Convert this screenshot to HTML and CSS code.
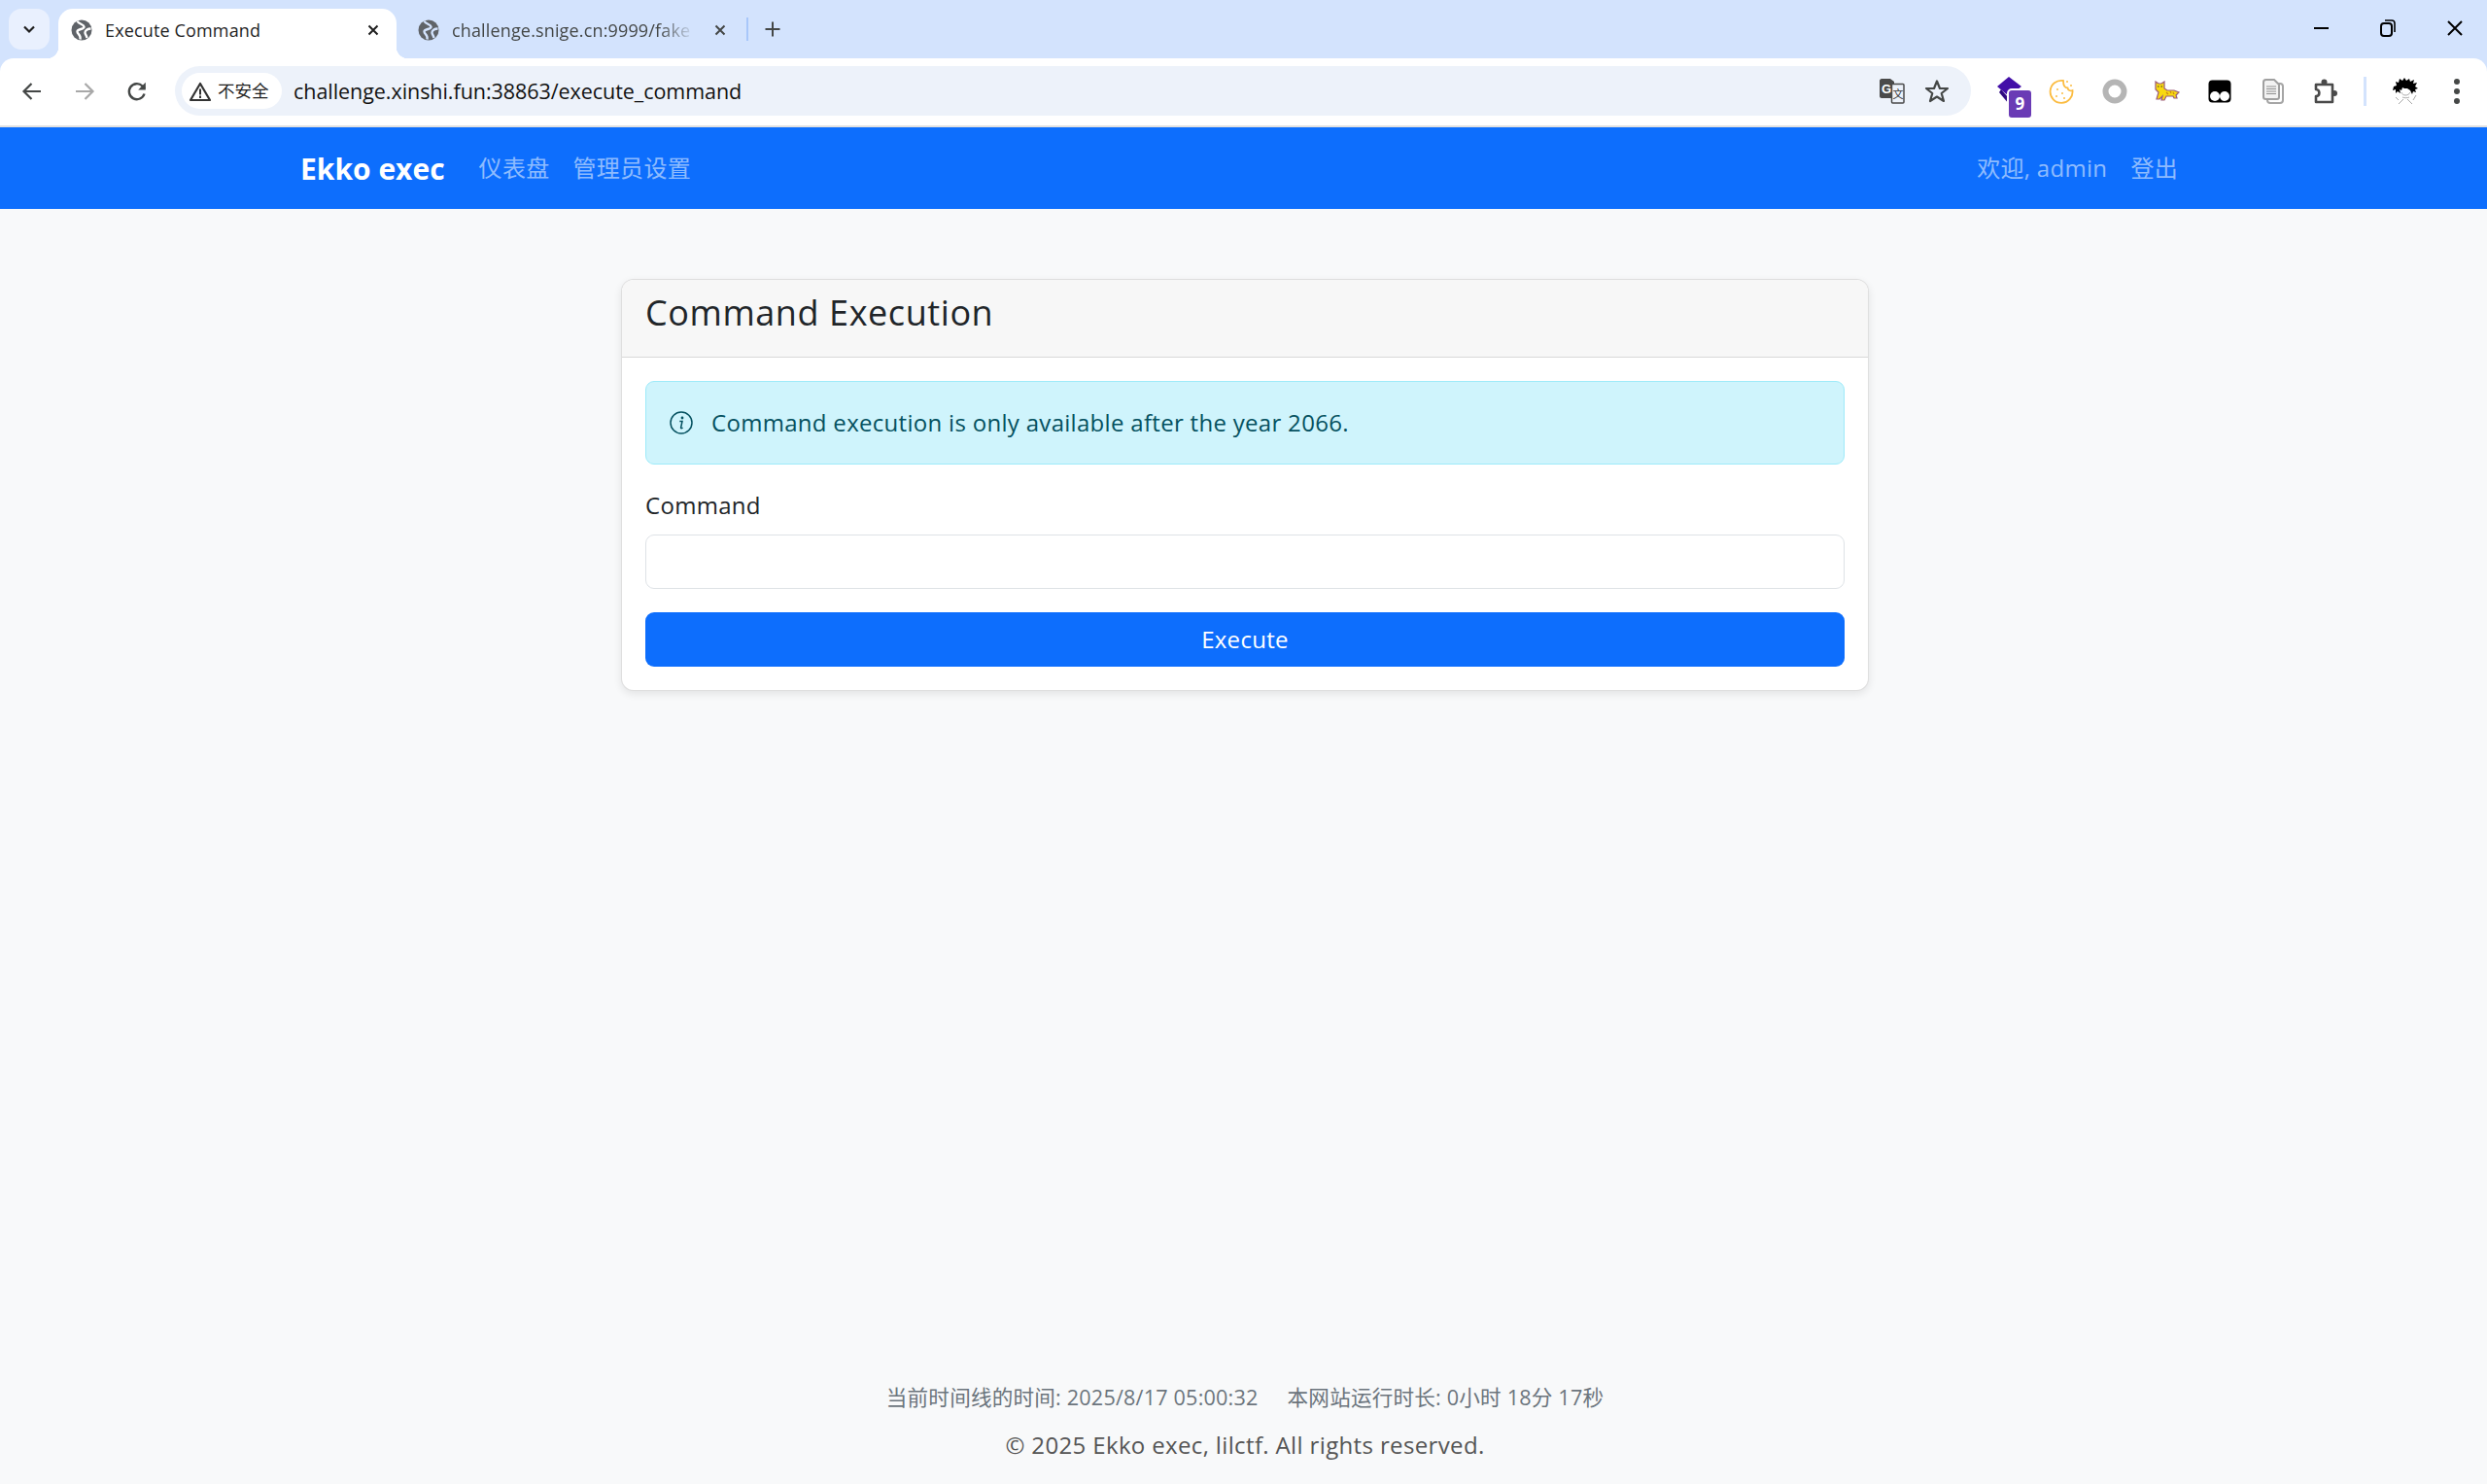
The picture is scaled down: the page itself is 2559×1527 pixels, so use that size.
FILE: index.html
```html
<!DOCTYPE html>
<html lang="zh-CN">
<head>
<meta charset="utf-8">
<title>Execute Command</title>
<link rel="stylesheet" href="styles.css">
</head>
<body>
<header class="chrome">
  <div class="tabstrip">
    <div class="tabsearch"><svg width="16" height="16" viewBox="0 0 16 16"><path d="M3 5.5 8 10.5 13 5.5" fill="none" stroke="#1f1f1f" stroke-width="2.2"/></svg></div>
    <div class="tab tab-active">
      <svg class="globe" width="22" height="22" viewBox="0 0 22 22"><circle cx="11" cy="11" r="10.5" fill="#5f6368"/><path d="M6.500 1.500C7.500 5 13 4.500 13.500 7.500S6.500 9.500 6.500 12.500 10.500 15 9.500 20.500M20.500 9.500C17 9.500 14.500 11.500 14.500 13.500S16 16 16.500 19" fill="none" stroke="#fff" stroke-width="2.400"/></svg>
      <span class="tab-title">Execute Command</span>
      <svg class="tab-close" width="14" height="14" viewBox="0 0 14 14"><path d="M2.500 2.500 11.500 11.500M11.500 2.500 2.500 11.500" stroke="#1f1f1f" stroke-width="2"/></svg>
    </div>
    <div class="tab tab-idle">
      <svg class="globe" width="22" height="22" viewBox="0 0 22 22"><circle cx="11" cy="11" r="10.500" fill="#5f6368"/><path d="M6.500 1.500C7.500 5 13 4.500 13.500 7.500S6.500 9.500 6.500 12.500 10.500 15 9.500 20.500M20.500 9.500C17 9.500 14.500 11.500 14.500 13.500S16 16 16.500 19" fill="none" stroke="#d3e3fd" stroke-width="2.400"/></svg>
      <span class="tab-title tab-title-fade">challenge.snige.cn:9999/fake</span>
      <svg class="tab-close" width="14" height="14" viewBox="0 0 14 14"><path d="M2.500 2.500 11.500 11.500M11.500 2.500 2.500 11.500" stroke="#444746" stroke-width="2"/></svg>
    </div>
    <div class="tab-sep"></div>
    <div class="newtab"><svg width="18" height="18" viewBox="0 0 18 18"><path d="M9 1.500V16.500M1.500 9H16.500" stroke="#444746" stroke-width="2"/></svg></div>
    <div class="winctl">
      <svg width="70" height="58" viewBox="0 0 70 58"><path d="M26 29H41" stroke="#000" stroke-width="2"/></svg>
      <svg width="68" height="58" viewBox="0 0 68 58"><rect x="25" y="24" width="11" height="13" rx="3" fill="none" stroke="#000" stroke-width="2"/><path d="M29 21H36C38 21 39 22 39 24V33" fill="none" stroke="#000" stroke-width="1.600"/></svg>
      <svg width="66" height="58" viewBox="0 0 66 58"><path d="M26 22 40 36M40 22 26 36" stroke="#000" stroke-width="2"/></svg>
    </div>
  </div>
  <div class="toolbar">
    <div class="tbtn"><svg width="24" height="24" viewBox="0 0 24 24"><path d="M21 12H4M11.500 4 3.500 12 11.500 20" fill="none" stroke="#444746" stroke-width="2.200"/></svg></div>
    <div class="tbtn"><svg width="24" height="24" viewBox="0 0 24 24"><path d="M3 12H20M12.500 4 20.500 12 12.500 20" fill="none" stroke="#a8a8a8" stroke-width="2.200"/></svg></div>
    <div class="tbtn"><svg width="24" height="24" viewBox="0 0 24 24"><path d="M19.500 14.500A8 8 0 1 1 17.500 6.500L20 9" fill="none" stroke="#444746" stroke-width="2.400"/><path d="M20.800 2.800V10.500H13.200Z" fill="#444746"/></svg></div>
    <div class="omnibox">
      <div class="chip">
        <svg width="26" height="24" viewBox="0 0 26 24"><path d="M13 4 23 21H3Z" fill="none" stroke="#333" stroke-width="2.200" stroke-linejoin="round"/><path d="M13 9.500V15.500M13 16.500V19" stroke="#333" stroke-width="2"/></svg>
        <span>不安全</span>
      </div>
      <span class="url">challenge.xinshi.fun:38863/execute_command</span>
      <div class="omni-icons">
        <svg width="26" height="26" viewBox="0 0 26 26"><path d="M2 0H11L15 3V20H2C1 20 0 19 0 18V2C0 1 1 0 2 0Z" fill="#4a4a4a"/><rect x="12.500" y="5.500" width="12.500" height="19.500" rx="1" fill="#edf2fa" stroke="#4a4a4a" stroke-width="1.500"/><text x="2" y="14.500" class="t-g">G</text><text x="13.500" y="20" class="t-w">文</text></svg>
        <svg width="26" height="26" viewBox="0 0 26 26"><path d="M13 2.500 16 10H24L17.700 15 20 23 13 18.500 6 23 8.300 15 2 10H10Z" fill="none" stroke="#444746" stroke-width="2.200" stroke-linejoin="round"/></svg>
      </div>
    </div>
    <div class="ext-row">
      <div class="ext">
        <svg width="34" height="34" viewBox="-3 0 34 34"><path d="M14 2 27 12 14 22 2 12Z" fill="#4310a8"/><path d="M6 15 14 24 20 28 14 30 4 18Z" fill="#2f0a80"/></svg>
        <span class="ext-badge">9</span>
      </div>
      <div class="ext"><svg width="26" height="26" viewBox="0 0 26 26"><path d="M15 2A11.500 11.500 0 1 0 24.500 12C22 13 20 12 19.500 9.500 17 9.500 15 7 15 2Z" fill="#fff" stroke="#fbbc42" stroke-width="1.800"/><circle cx="9" cy="11" r="1" fill="#fbbc42"/><circle cx="14" cy="15" r="1" fill="#fbbc42"/><circle cx="8" cy="18" r="1" fill="#fbbc42"/><circle cx="16" cy="20" r="1" fill="#fbbc42"/><circle cx="19" cy="3" r="1" fill="#fbbc42"/><circle cx="23" cy="7" r="1" fill="#fbbc42"/></svg></div>
      <div class="ext"><svg width="26" height="26" viewBox="0 0 26 26"><circle cx="13" cy="13" r="9.500" fill="none" stroke="#b5b5b5" stroke-width="6"/></svg></div>
      <div class="ext"><svg width="26" height="22" viewBox="0 0 26 22"><path d="M1 1 4 3H7L10 1V8L13 10H20L25 12 23 14 22 15 23 18H20L19 16H12L10 20H7L8 16 5 19H2L4 12 1 9Z" fill="#f8d90f" stroke="#9a5a7a" stroke-width="1.200"/><path d="M12 12 14 14M16 11 17 13M19 12 20 14" stroke="#c9821c" stroke-width="1.200"/><path d="M3 6H4.500M6.500 6H8" stroke="#333" stroke-width="1"/></svg></div>
      <div class="ext"><svg width="24" height="24" viewBox="0 0 24 24"><rect x="0.500" y="0.500" width="23" height="23" rx="4" fill="#000"/><circle cx="7" cy="17" r="5" fill="#fff"/><circle cx="17" cy="17" r="5" fill="#fff"/></svg></div>
      <div class="ext"><svg width="22" height="26" viewBox="0 0 22 26"><rect x="5" y="5" width="16" height="20" rx="3" fill="#fff" stroke="#a6a6a6" stroke-width="2"/><path d="M3.500 1H12L17 6V19C17 20.500 16 21 15 21H3.500C2 21 1 20.500 1 19V3.500C1 2 2 1 3.500 1Z" fill="#f2f2f2" stroke="#a0a0a0" stroke-width="2"/><path d="M4 8H14M4 10.500H14M4 13H14M4 15.500H14" stroke="#909090" stroke-width="1.200"/></svg></div>
      <div class="ext"><svg width="26" height="26" viewBox="0 0 26 26"><path d="M3 6H20V24H3V18C7.500 18 7.500 11 3 11Z" fill="none" stroke="#4a4a4a" stroke-width="2.600" stroke-linejoin="round"/><circle cx="11.500" cy="3.500" r="3" fill="#4a4a4a"/><circle cx="22" cy="15" r="3" fill="#4a4a4a"/></svg></div>
    </div>
    <div class="tool-sep"></div>
    <div class="profile"><svg width="26" height="28" viewBox="0 0 26 28"><path d="M1 9 4 8 3 4 6 5 7 1 10 3 12 0 14 3 17 1 18 4 22 2 21 6 25 5 23 9 26 11 23 12 24 15 21 14 20 17 18 13 15 11 12 11 10 10 9 13 7 12 8 16 5 14 3 16 3 12 0 13Z" fill="#000"/><path d="M9 15C10 19 16 19 18 15M10 20C12 21 15 21 17 20M6 27 11 22M15 22 20 27M3 20 6 23M24 18 21 23" fill="none" stroke="#a8a8a8" stroke-width="1"/></svg></div>
    <div class="dots"><i></i><i></i><i></i></div>
  </div>
</header>

<nav class="navbar">
  <div class="container nav-inner">
    <a class="brand">Ekko exec</a>
    <a class="nav-link">仪表盘</a>
    <a class="nav-link">管理员设置</a>
    <span class="nav-spacer"></span>
    <span class="nav-link">欢迎, admin</span>
    <a class="nav-link">登出</a>
  </div>
</nav>

<main class="main">
  <section class="card">
    <div class="card-header"><h1 class="card-title">Command Execution</h1></div>
    <div class="card-body">
      <div class="alert">
        <svg class="alert-icon" width="24" height="24" viewBox="0 0 24 24"><circle cx="12" cy="12" r="11" fill="none" stroke="#055160" stroke-width="1.500"/><path d="M10.300 10.500H13L11.600 17C11.500 17.800 12.300 18 13.500 17" fill="none" stroke="#055160" stroke-width="1.500"/><circle cx="13" cy="7" r="1.400" fill="#055160"/></svg>
        <span>Command execution is only available after the year 2066.</span>
      </div>
      <label class="label" for="cmd">Command</label>
      <input class="input" id="cmd" type="text">
      <button class="btn" type="button">Execute</button>
    </div>
  </section>
</main>

<footer class="footer">
  <p class="footer-times"><span>当前时间线的时间: 2025/8/17 05:00:32</span><span>本网站运行时长: 0小时 18分 17秒</span></p>
  <p class="footer-copy">© 2025 Ekko exec, lilctf. All rights reserved.</p>
</footer>
</body>
</html>
```

FILE: styles.css
```css
* { box-sizing: border-box; }
html, body { margin: 0; height: 100%; }
body {
  display: flex;
  flex-direction: column;
  min-height: 1527px;
  background: #f8f9fa;
  color: #212529;
  font-family: "Open Sans", "Noto Sans CJK SC", sans-serif;
  font-size: 24px;
  letter-spacing: .0125em;
  line-height: 1.5;
  overflow: hidden;
}

/* browser chrome */
.chrome { flex: none; background: #d3e3fd; }
.tabstrip { display: flex; align-items: flex-start; height: 60px; padding: 9px 0 0 9px; }
.tabsearch {
  width: 42px; height: 42px; border-radius: 13px; background: #e9f0fe;
  display: flex; align-items: center; justify-content: center;
}
.tab { display: flex; align-items: center; height: 51px; padding-bottom: 7px; font-size: 18px; position: relative; }
.tab-active {
  margin-left: 9px; width: 348px; padding-left: 13px; background: #fff; border-radius: 15px 15px 0 0;
  color: #1f1f1f;
}
.tab-active::before, .tab-active::after {
  content: ""; position: absolute; bottom: 0; width: 12px; height: 12px;
}
.tab-active::before { left: -12px; background: radial-gradient(circle at 0 0, transparent 12px, #fff 12.500px); }
.tab-active::after { right: -12px; background: radial-gradient(circle at 100% 0, transparent 12px, #fff 12.500px); }
.tab-idle { width: 350px; padding-left: 22px; color: #444746; }
.globe { flex: none; }
.tab-title { margin-left: 13px; white-space: nowrap; width: 260px; overflow: hidden; letter-spacing: .15px; }
.tab-active .tab-close { margin-left: auto; margin-right: 17px; }
.tab-idle .tab-title { width: 250px; }
.tab-title-fade { -webkit-mask-image: linear-gradient(to right, #000 85%, transparent); mask-image: linear-gradient(to right, #000 85%, transparent); }
.tab-idle .tab-close { margin-left: 19px; }
.tab-sep { width: 2px; height: 24px; margin: 9px 0 0 10px; background: #a8c7fa; }
.newtab { margin: 12px 0 0 16px; height: 18px; display: flex; }
.winctl { display: flex; margin: -9px 0 0 auto; }
.toolbar {
  display: flex; align-items: center; height: 71px; padding: 0 28px 2px 6px; background: #fff;
  border-radius: 14px 14px 0 0; border-bottom: 2px solid #e1e1e1;
}
.tbtn { width: 54px; height: 54px; display: flex; align-items: center; justify-content: center; flex: none; }
.omnibox {
  flex: 1; display: flex; align-items: center; height: 51px; margin-left: 12px; padding-left: 7px;
  background: #edf2fa; border-radius: 26px;
}
.chip {
  display: flex; align-items: center; gap: 5px; height: 37px; width: 103px; padding-left: 6px;
  background: #fff; border-radius: 19px; font-size: 17.500px; color: #1f1f1f; letter-spacing: 0;
}
.url { margin: 2px 0 0 12px; font-size: 21.500px; color: #111; letter-spacing: -.05px; }
.omni-icons { margin-left: auto; display: flex; align-items: center; gap: 20px; padding-right: 22px; }
.t-g { font: 700 13px "Liberation Sans", sans-serif; fill: #fff; }
.t-w { font: 400 11px "Noto Sans CJK SC", sans-serif; fill: #333; }
.ext-row { display: flex; margin-left: 12px; }
.ext { width: 54.300px; height: 54px; display: flex; align-items: center; justify-content: center; position: relative; }
.ext-badge {
  position: absolute; left: 27px; top: 26px; width: 23px; height: 28px; border-radius: 5px;
  background: #6a3bb5; border: 2px solid #fff; box-sizing: content-box; margin: -2px;
  color: #fff; font: 700 17px/28px "Open Sans", sans-serif; text-align: center;
}
.tool-sep { width: 3px; height: 30px; margin-left: 12px; background: #d3e3fd; }
.profile { width: 26px; margin-left: 27px; display: flex; }
.dots { display: flex; flex-direction: column; gap: 4px; margin-left: 37px; }
.dots i { display: block; width: 6px; height: 6px; border-radius: 50%; background: #444746; }

/* site */
.container { width: 1980px; margin: 0 auto; padding: 0 28.500px 0 19.500px; }
.navbar { flex: none; height: 84px; background: #0d6efd; }
.nav-inner { display: flex; align-items: center; height: 100%; gap: 24px; }
.brand { color: #fff; font-size: 30px; font-weight: 700; margin-right: 11px; letter-spacing: 0; }
.nav-link { color: rgba(255, 255, 255, .55); }
.nav-spacer { flex: 1; }

.main { flex: 1; padding: 72px 0 0 3px; }
.card {
  width: 1284px; margin: 0 auto; background: #fff; border: 1.500px solid rgba(0, 0, 0, .125);
  border-radius: 13px; box-shadow: 0 3px 9px rgba(0, 0, 0, .09); overflow: hidden;
}
.card-header { padding: 7px 24px 18px; background: #f7f7f7; border-bottom: 1.500px solid rgba(0, 0, 0, .125); }
.card-title { margin: 0; font-size: 36px; font-weight: 400; line-height: 54px; letter-spacing: .016em; }
.card-body { padding: 24px; }
.alert {
  display: flex; align-items: center; gap: 19px; height: 86px; padding: 0 24px; margin-bottom: 24px;
  background: #cff4fc; border: 1.500px solid #9eeaf9; border-radius: 9px; color: #055160;
}
.alert-icon { flex: none; }
.label { display: block; margin-bottom: 12px; }
.input {
  display: block; width: 100%; height: 56px; margin-bottom: 24px; background: #fff;
  border: 1.500px solid #dee2e6; border-radius: 9px;
}
.btn {
  display: block; width: 100%; height: 56px; border: 0; border-radius: 9px; background: #0d6efd;
  color: #fff; font: inherit; letter-spacing: inherit;
}
.footer { flex: none; padding: 0 0 22px 3px; text-align: center; color: #6c757d; }
.footer p { margin: 0; }
.footer-times { display: flex; justify-content: center; gap: 30px; font-size: 21.600px; line-height: 32px; letter-spacing: .009em; margin-bottom: 15px !important; }
.footer-copy { color: #555; letter-spacing: .015em; }
```
